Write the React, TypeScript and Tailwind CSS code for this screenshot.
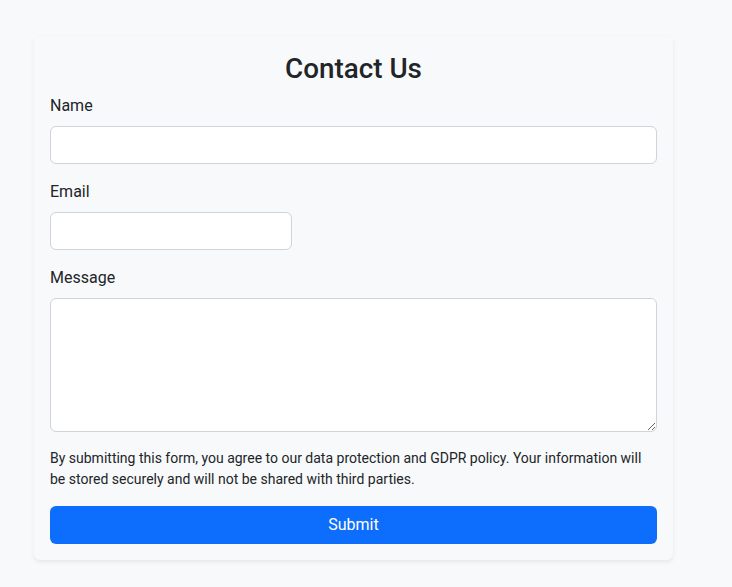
const App = () => {
    return (
        <div className="min-h-[587px] bg-[#f8f9fa] pt-[36px] pb-6 font-['Roboto',sans-serif] text-[#212529]">
            {/* Card */}
            <div className="ml-[34px] w-[639px] rounded-md bg-[#f8f9fa] p-4 shadow-[0_2px_4px_rgba(0,0,0,0.075)]">
                <h2 className="mb-[9px] text-center text-[27.8px] font-medium leading-[1.2]">Contact Us</h2>

                <form onSubmit={(e) => e.preventDefault()}>
                    <div className="mb-4">
                        <label htmlFor="name" className="mb-2 block text-base leading-6">
                            Name
                        </label>
                        <input
                            id="name"
                            type="text"
                            className="block h-[38px] w-full rounded-md border border-[#ced4da] bg-white px-3 text-base outline-none"
                        />
                    </div>

                    <div className="mb-4">
                        <label htmlFor="email" className="mb-2 block text-base leading-6">
                            Email
                        </label>
                        <input
                            id="email"
                            type="email"
                            className="block h-[38px] w-[242px] rounded-md border border-[#ced4da] bg-white px-3 text-base outline-none"
                        />
                    </div>

                    <div className="mb-4">
                        <label htmlFor="message" className="mb-2 block text-base leading-6">
                            Message
                        </label>
                        <textarea
                            id="message"
                            rows={5}
                            className="block h-[134px] w-full rounded-md border border-[#ced4da] bg-white px-3 py-1.5 text-base outline-none"
                        />
                    </div>

                    <p className="mb-4 text-sm leading-[21px]">
                        By submitting this form, you agree to our data protection and GDPR policy. Your information will
                        be stored securely and will not be shared with third parties.
                    </p>

                    <button
                        type="submit"
                        className="block h-[38px] w-full rounded-md bg-[#0d6efd] text-base text-white"
                    >
                        Submit
                    </button>
                </form>
            </div>
        </div>
    );
};

export default App;
